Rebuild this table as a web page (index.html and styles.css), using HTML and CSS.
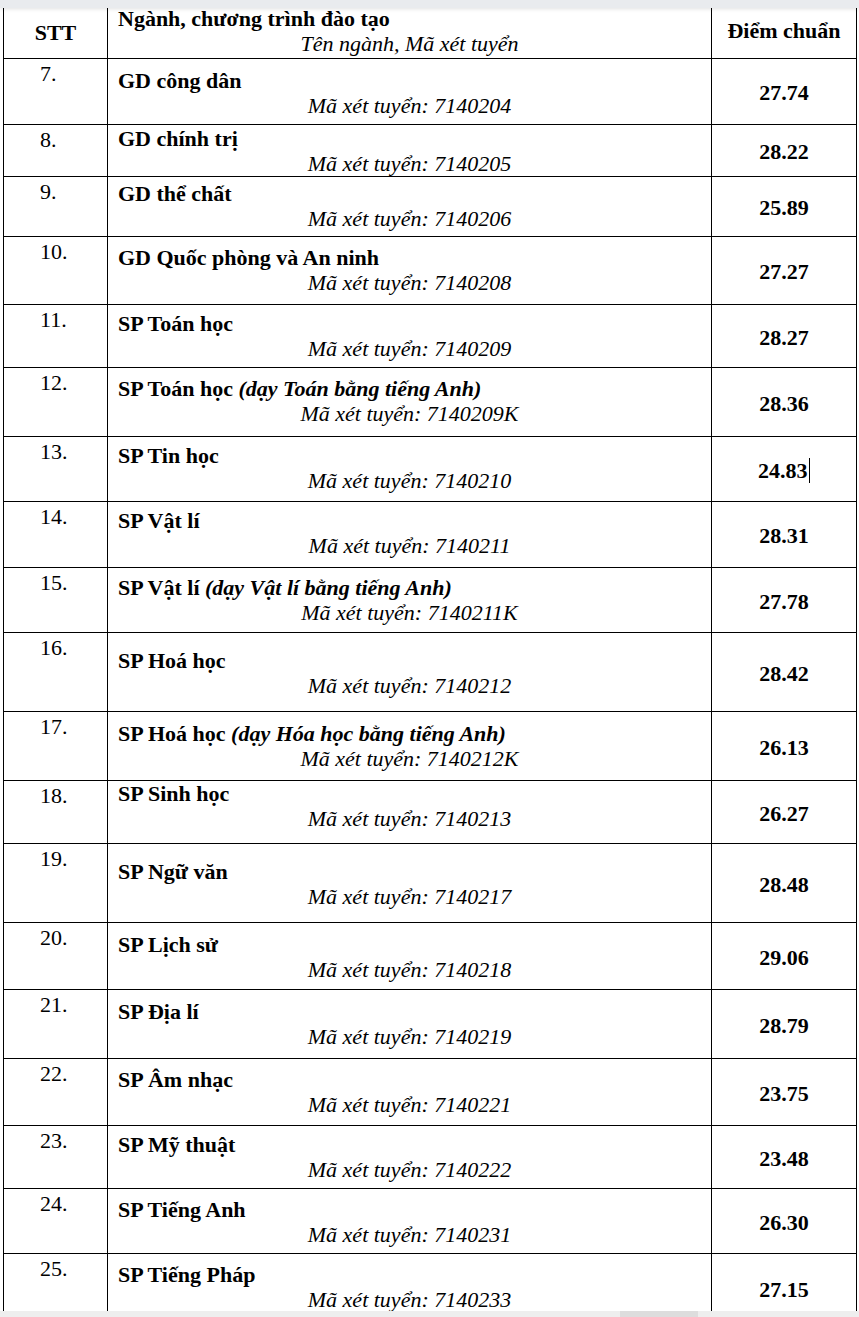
FILE: index.html
```html
<!DOCTYPE html>
<html lang="vi">
<head>
<meta charset="utf-8">
<title>Điểm chuẩn</title>
<link rel="stylesheet" href="styles.css">
</head>
<body>
<div class="topbar"></div>
<table class="scores">
  <colgroup><col class="c1"><col class="c2"><col class="c3"></colgroup>
  <thead>
    <tr>
      <th class="stt-h">STT</th>
      <th class="name-h"><div class="nm">Ngành, chương trình đào tạo</div><div class="code">Tên ngành, Mã xét tuyển</div></th>
      <th class="score-h">Điểm chuẩn</th>
    </tr>
  </thead>
  <tbody>
    <tr><td class="stt">7.</td><td class="name"><div class="nm">GD công dân</div><div class="code">Mã xét tuyển: 7140204</div></td><td class="score">27.74</td></tr>
    <tr><td class="stt">8.</td><td class="name"><div class="nm">GD chính trị</div><div class="code">Mã xét tuyển: 7140205</div></td><td class="score">28.22</td></tr>
    <tr><td class="stt">9.</td><td class="name"><div class="nm">GD thể chất</div><div class="code">Mã xét tuyển: 7140206</div></td><td class="score">25.89</td></tr>
    <tr><td class="stt">10.</td><td class="name"><div class="nm">GD Quốc phòng và An ninh</div><div class="code">Mã xét tuyển: 7140208</div></td><td class="score">27.27</td></tr>
    <tr><td class="stt">11.</td><td class="name"><div class="nm">SP Toán học</div><div class="code">Mã xét tuyển: 7140209</div></td><td class="score">28.27</td></tr>
    <tr><td class="stt">12.</td><td class="name"><div class="nm">SP Toán học <i>(dạy Toán bằng tiếng Anh)</i></div><div class="code">Mã xét tuyển: 7140209K</div></td><td class="score">28.36</td></tr>
    <tr><td class="stt">13.</td><td class="name"><div class="nm">SP Tin học</div><div class="code">Mã xét tuyển: 7140210</div></td><td class="score">24.83<span class="caret"></span></td></tr>
    <tr><td class="stt">14.</td><td class="name"><div class="nm">SP Vật lí</div><div class="code">Mã xét tuyển: 7140211</div></td><td class="score">28.31</td></tr>
    <tr><td class="stt">15.</td><td class="name"><div class="nm">SP Vật lí <i>(dạy Vật lí bằng tiếng Anh)</i></div><div class="code">Mã xét tuyển: 7140211K</div></td><td class="score">27.78</td></tr>
    <tr><td class="stt">16.</td><td class="name"><div class="nm">SP Hoá học</div><div class="code">Mã xét tuyển: 7140212</div></td><td class="score">28.42</td></tr>
    <tr><td class="stt">17.</td><td class="name"><div class="nm">SP Hoá học <i>(dạy Hóa học bằng tiếng Anh)</i></div><div class="code">Mã xét tuyển: 7140212K</div></td><td class="score">26.13</td></tr>
    <tr><td class="stt">18.</td><td class="name"><div class="nm">SP Sinh học</div><div class="code">Mã xét tuyển: 7140213</div></td><td class="score">26.27</td></tr>
    <tr><td class="stt">19.</td><td class="name"><div class="nm">SP Ngữ văn</div><div class="code">Mã xét tuyển: 7140217</div></td><td class="score">28.48</td></tr>
    <tr><td class="stt">20.</td><td class="name"><div class="nm">SP Lịch sử</div><div class="code">Mã xét tuyển: 7140218</div></td><td class="score">29.06</td></tr>
    <tr><td class="stt">21.</td><td class="name"><div class="nm">SP Địa lí</div><div class="code">Mã xét tuyển: 7140219</div></td><td class="score">28.79</td></tr>
    <tr><td class="stt">22.</td><td class="name"><div class="nm">SP Âm nhạc</div><div class="code">Mã xét tuyển: 7140221</div></td><td class="score">23.75</td></tr>
    <tr><td class="stt">23.</td><td class="name"><div class="nm">SP Mỹ thuật</div><div class="code">Mã xét tuyển: 7140222</div></td><td class="score">23.48</td></tr>
    <tr><td class="stt">24.</td><td class="name"><div class="nm">SP Tiếng Anh</div><div class="code">Mã xét tuyển: 7140231</div></td><td class="score">26.30</td></tr>
    <tr><td class="stt">25.</td><td class="name"><div class="nm">SP Tiếng Pháp</div><div class="code">Mã xét tuyển: 7140233</div></td><td class="score">27.15</td></tr>
  </tbody>
</table>
<div class="bottombar"><div class="thumb"></div></div>
</body>
</html>
```

FILE: styles.css
```css
html, body {
  margin: 0;
  padding: 0;
  background: #ffffff;
}

body {
  font-family: "Liberation Serif", "Times New Roman", serif;
  font-size: 22px;
  color: #000000;
  overflow: hidden;
  height: 1317px;
}

.topbar {
  position: fixed;
  top: 0;
  left: 0;
  right: 0;
  height: 8px;
  background: #e9ebee;
  box-shadow: 0 1px 4px rgba(0, 0, 0, 0.12);
  z-index: 5;
}

.bottombar {
  position: fixed;
  left: 0;
  right: 0;
  bottom: 0;
  height: 6px;
  background: #eeeeee;
  z-index: 5;
}

.bottombar .thumb {
  position: absolute;
  left: 620px;
  top: 0;
  width: 78px;
  height: 6px;
  background: #dddddd;
}

.scores {
  border-collapse: collapse;
  table-layout: fixed;
  width: 853px;
  margin: 4px 0 0 3px;
}

.c1 { width: 104px; }
.c2 { width: 604px; }
.c3 { width: 145px; }

.scores th,
.scores td {
  border: 1px solid #000000;
  padding: 0;
  line-height: 25px;
  font-weight: normal;
}

.scores .stt-h,
.scores .score-h {
  font-weight: bold;
  text-align: center;
  vertical-align: middle;
}

.scores .stt-h { padding-top: 2px; }
.scores .score-h { padding-bottom: 2px; }

.scores .name-h {
  text-align: left;
  vertical-align: top;
}

.name-h .nm {
  padding-top: 1px;
}

.scores .stt {
  vertical-align: top;
  text-align: left;
  padding: 2px 0 0 36px;
}

.scores .name {
  vertical-align: top;
}

.nm {
  font-weight: bold;
  padding-left: 10px;
  text-align: left;
}

.code {
  font-style: italic;
  text-align: center;
}

.scores .score {
  font-weight: bold;
  text-align: center;
  vertical-align: middle;
  padding-top: 2px;
}

.caret {
  display: inline-block;
  width: 1.5px;
  height: 25px;
  background: #000000;
  vertical-align: -5px;
  margin-left: 1px;
}

thead tr { height: 54px; }

tbody tr:nth-child(1) { height: 66px; }
tbody tr:nth-child(2) { height: 52px; }
tbody tr:nth-child(3) { height: 60px; }
tbody tr:nth-child(4) { height: 68px; }
tbody tr:nth-child(5) { height: 63px; }
tbody tr:nth-child(6) { height: 69px; }
tbody tr:nth-child(7) { height: 65px; }
tbody tr:nth-child(8) { height: 66px; }
tbody tr:nth-child(9) { height: 65px; }
tbody tr:nth-child(10) { height: 79px; }
tbody tr:nth-child(11) { height: 69px; }
tbody tr:nth-child(12) { height: 63px; }
tbody tr:nth-child(13) { height: 79px; }
tbody tr:nth-child(14) { height: 67px; }
tbody tr:nth-child(15) { height: 69px; }
tbody tr:nth-child(16) { height: 67px; }
tbody tr:nth-child(17) { height: 63px; }
tbody tr:nth-child(18) { height: 65px; }
tbody tr:nth-child(19) { height: 70px; }

tbody tr:nth-child(1) .name { padding-top: 9px; }
tbody tr:nth-child(2) .name { padding-top: 1px; }
tbody tr:nth-child(3) .name { padding-top: 4px; }
tbody tr:nth-child(4) .name { padding-top: 8px; }
tbody tr:nth-child(5) .name { padding-top: 6px; }
tbody tr:nth-child(6) .name { padding-top: 8px; }
tbody tr:nth-child(7) .name { padding-top: 6px; }
tbody tr:nth-child(8) .name { padding-top: 6px; }
tbody tr:nth-child(9) .name { padding-top: 7px; }
tbody tr:nth-child(10) .name { padding-top: 15px; }
tbody tr:nth-child(11) .name { padding-top: 9px; }
tbody tr:nth-child(12) .name { padding-top: 0px; }
tbody tr:nth-child(13) .name { padding-top: 15px; }
tbody tr:nth-child(14) .name { padding-top: 9px; }
tbody tr:nth-child(15) .name { padding-top: 9px; }
tbody tr:nth-child(16) .name { padding-top: 8px; }
tbody tr:nth-child(17) .name { padding-top: 6px; }
tbody tr:nth-child(18) .name { padding-top: 8px; }
tbody tr:nth-child(19) .name { padding-top: 8px; }
```
